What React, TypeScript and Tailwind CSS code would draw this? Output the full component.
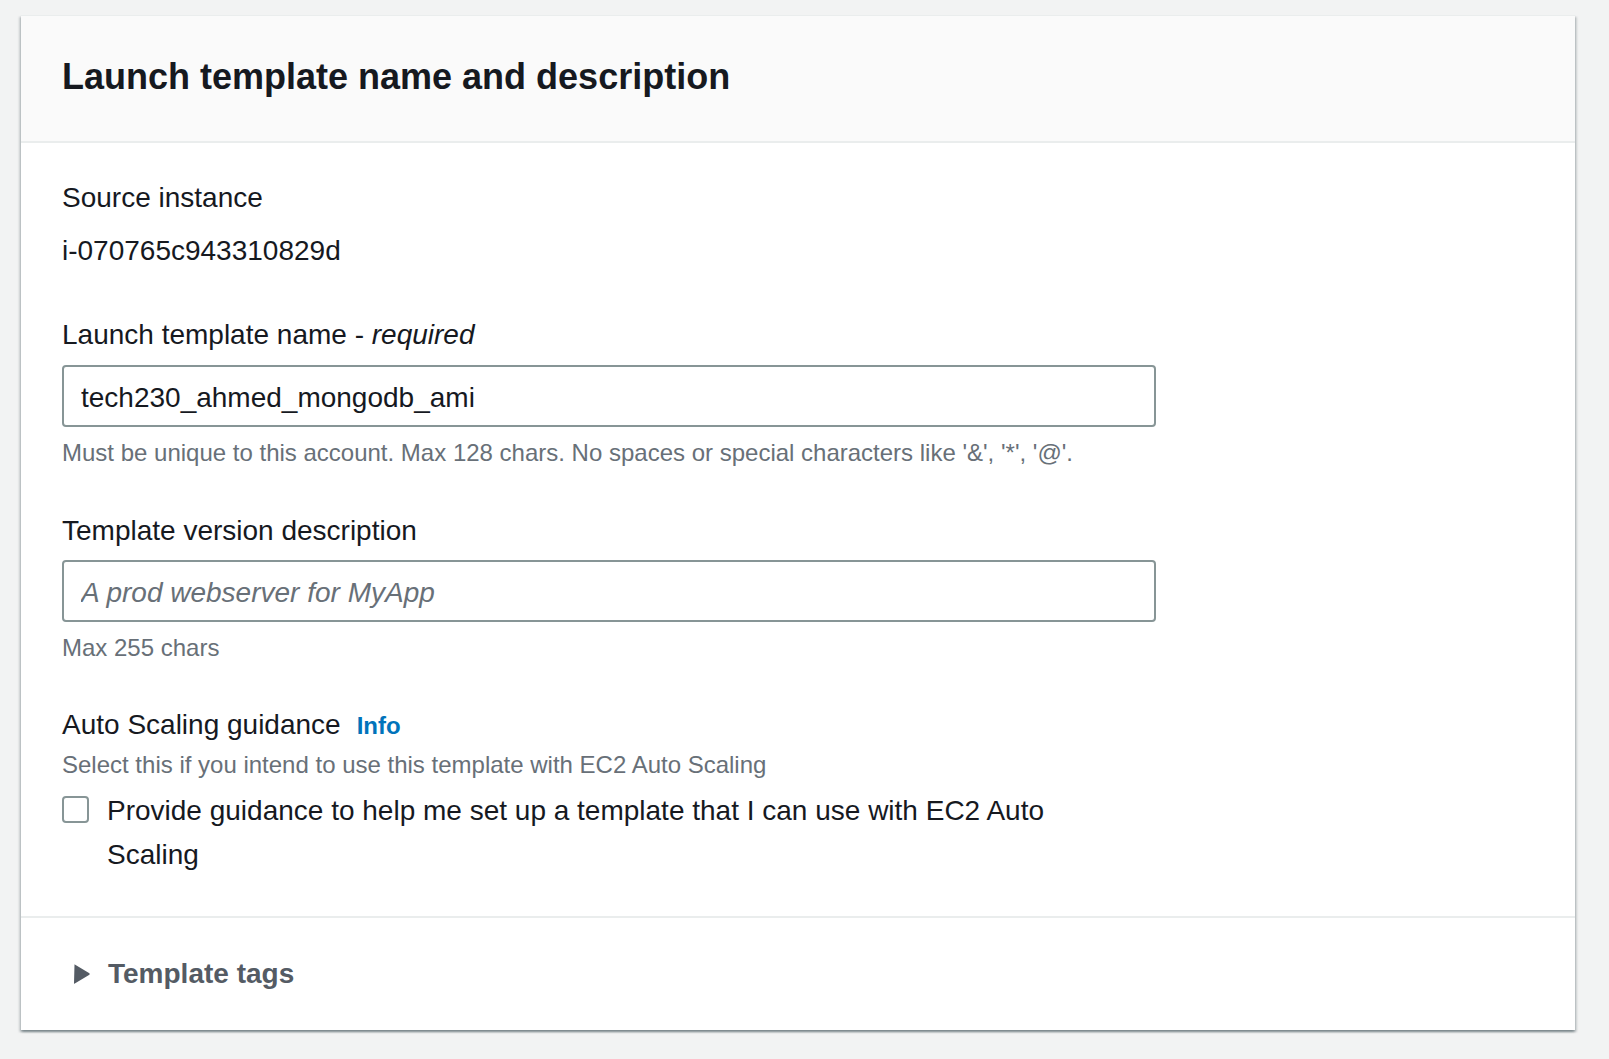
const label = "text-[28px] leading-[40px] text-[#16191f]";
const hint = "text-[24px] leading-[32px] text-[#687078]";
const input =
  "block h-[62px] w-full rounded-[4px] border-2 border-[#879596] bg-white pl-[17px] pr-4 pt-[3px] text-[28px] text-[#16191f] outline-none placeholder:italic placeholder:text-[#687078]";

function Field({
  title,
  children,
}: {
  title: React.ReactNode;
  children: React.ReactNode;
}) {
  return (
    <div>
      <p className={label}>{title}</p>
      {children}
    </div>
  );
}

export default function App() {
  return (
    <div className="min-h-screen bg-[#f2f3f3] pl-[21px] pt-[15px] pb-[29px] font-['Liberation_Sans',Arial,sans-serif]">
      <div className="w-[1554px] border-t border-[#eaeded] bg-white shadow-[0_2px_2px_0_rgba(0,28,36,0.3),2px_2px_2px_0_rgba(0,28,36,0.15),-2px_2px_2px_0_rgba(0,28,36,0.15)]">
        <div className="border-b-2 border-[#eaeded] bg-[#fafafa] px-[41px] pt-[39px] pb-[42px]">
          <h2 className="text-[36px] font-bold leading-[44px] text-[#16191f]">
            Launch template name and description
          </h2>
        </div>

        <div className="px-[41px] pt-[35px] pb-[39px]">
          <div className="w-[1094px]">
            <Field title="Source instance">
              <p className={`${label} mt-[13px]`}>i-070765c943310829d</p>
            </Field>

            <div className="mt-[44px]">
              <Field
                title={
                  <>
                    Launch template name - <i>required</i>
                  </>
                }
              >
                <input
                  className={`${input} mt-[10px]`}
                  defaultValue="tech230_ahmed_mongodb_ami"
                />
                <p className={`${hint} mt-[10px]`}>
                  Must be unique to this account. Max 128 chars. No spaces or
                  special characters like '&amp;', '*', '@'.
                </p>
              </Field>
            </div>

            <div className="mt-[42px]">
              <Field title="Template version description">
                <input
                  className={`${input} mt-[9px]`}
                  placeholder="A prod webserver for MyApp"
                />
                <p className={`${hint} mt-[10px]`}>Max 255 chars</p>
              </Field>
            </div>

            <div className="mt-[41px]">
              <p className={label}>
                Auto Scaling guidance
                <a className="ml-[16px] text-[24px] font-bold text-[#0073bb]">
                  Info
                </a>
              </p>
              <p className={`${hint} mt-[3px]`}>
                Select this if you intend to use this template with EC2 Auto
                Scaling
              </p>
              <label className="mt-[8px] flex items-start gap-[18px]">
                <span className="mt-[7px] h-[27px] w-[27px] shrink-0 rounded-[4px] border-2 border-[#879596] bg-white" />
                <span className="max-w-[960px] text-[28px] leading-[44px] text-[#16191f]">
                  Provide guidance to help me set up a template that I can use
                  with EC2 Auto Scaling
                </span>
              </label>
            </div>
          </div>
        </div>

        <div className="flex items-center gap-[14px] border-t-2 border-[#eaeded] px-[41px] pt-[36px] pb-[36px]">
          <svg width="32" height="32" viewBox="0 0 32 32" className="shrink-0">
            <path
              d="M12.5 6.5 Q12 6 12.8 6.4 L27.4 15.3 Q28 16 27.4 16.7 L12.8 25.6 Q12 26 12 25.2 Z"
              fill="#545b64"
            />
          </svg>
          <span className="text-[28px] font-bold leading-[40px] text-[#545b64]">
            Template tags
          </span>
        </div>
      </div>
    </div>
  );
}
